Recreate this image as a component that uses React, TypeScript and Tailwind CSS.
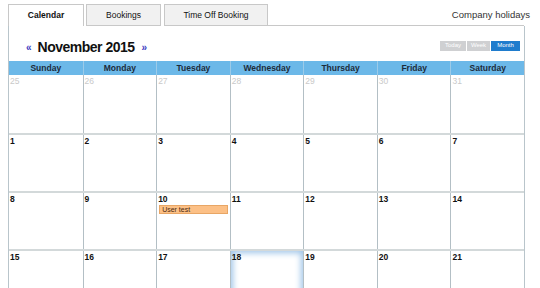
import React from 'react';

const days = ['Sunday', 'Monday', 'Tuesday', 'Wednesday', 'Thursday', 'Friday', 'Saturday'];

const weeks: { n: number; other?: boolean }[][] = [
  [25, 26, 27, 28, 29, 30, 31].map(n => ({ n, other: true })),
  [1, 2, 3, 4, 5, 6, 7].map(n => ({ n })),
  [8, 9, 10, 11, 12, 13, 14].map(n => ({ n })),
  [15, 16, 17, 18, 19, 20, 21].map(n => ({ n })),
];

export default function App() {
  return (
    <div className="w-[540px] h-[288px] overflow-hidden bg-white font-['Liberation_Sans',Arial,sans-serif] text-[#111]">
      {/* Tabs */}
      <div className="flex items-end pt-[4px] pl-[8px] pr-[16px]">
        <div className="w-[76px] h-[22px] flex items-center justify-center text-[8.5px] font-bold border border-b-0 border-[#c8c8c8] bg-white">
          Calendar
        </div>
        <div className="ml-[2px] w-[75px] h-[22px] flex items-center justify-center text-[8.5px] border border-[#c8c8c8] bg-[#f1f1f1]">
          Bookings
        </div>
        <div className="ml-[3px] w-[104px] h-[22px] flex items-center justify-center text-[8.5px] border border-[#c8c8c8] bg-[#f1f1f1]">
          Time Off Booking
        </div>
        <div className="flex-1 h-[22px] border-b border-[#c8c8c8] flex items-start justify-end pt-[4px]">
          <span className="text-[9.5px] text-[#333] mr-[-6px]">Company holidays</span>
        </div>
      </div>

      {/* Panel */}
      <div className="ml-[8px] w-[517px] border-x border-[#b9c5cb]">
        <div className="h-[35px] flex items-center justify-between pl-[17px] pr-[4px] pt-[7px]">
          <div className="flex items-center">
            <span className="text-[10px] font-bold text-[#3b3bbf] mr-[6px]">«</span>
            <span className="text-[14px] tracking-[-0.5px] font-bold text-[#111]">November 2015</span>
            <span className="text-[10px] font-bold text-[#3b3bbf] ml-[7px]">»</span>
          </div>
          <div className="flex gap-[1px] text-[6px] text-white mt-[-3px]">
            <span className="w-[26px] h-[10px] flex items-center justify-center bg-[#cfd0d2]">Today</span>
            <span className="w-[23px] h-[10px] flex items-center justify-center bg-[#cfd0d2]">Week</span>
            <span className="w-[29px] h-[10px] flex items-center justify-center bg-[#1f7ccd]">Month</span>
          </div>
        </div>

        {/* Header */}
        <div className="grid grid-cols-7 bg-[#6cb8e8] h-[14px]">
          {days.map((d, i) => (
            <div
              key={d}
              className={`flex items-center justify-center text-[8.5px] font-bold text-[#1c2b3a] ${i > 0 ? 'border-l border-[#9ccbe9]' : ''}`}
            >
              {d}
            </div>
          ))}
        </div>

        {/* Weeks */}
        {weeks.map((w, wi) => (
          <div key={wi} className={`grid grid-cols-7 h-[58px] ${wi > 0 ? 'border-t-2 border-[#d3d9da]' : ''}`}>
            {w.map((c, ci) => {
              const isToday = wi === 3 && ci === 3;
              return (
                <div
                  key={ci}
                  className={`relative ${ci > 0 ? 'border-l border-[#b3bfc5]' : ''} ${
                    isToday ? 'shadow-[inset_0_0_6px_2px_#9ec4e8]' : ''
                  }`}
                >
                  <div
                    className={`pl-[1px] pt-[1px] text-[8.5px] leading-[10px] ${
                      c.other ? 'text-[#c9c9c9]' : 'font-bold text-[#111]'
                    }`}
                  >
                    {c.n}
                  </div>
                  {wi === 2 && ci === 2 && (
                    <div className="mx-[2px] mt-[1px] h-[9px] bg-[#fcc086] border border-[#e8a665] text-[7px] leading-[7px] pl-[2px] text-[#4a2a10]">
                      User test
                    </div>
                  )}
                </div>
              );
            })}
          </div>
        ))}
      </div>
    </div>
  );
}
